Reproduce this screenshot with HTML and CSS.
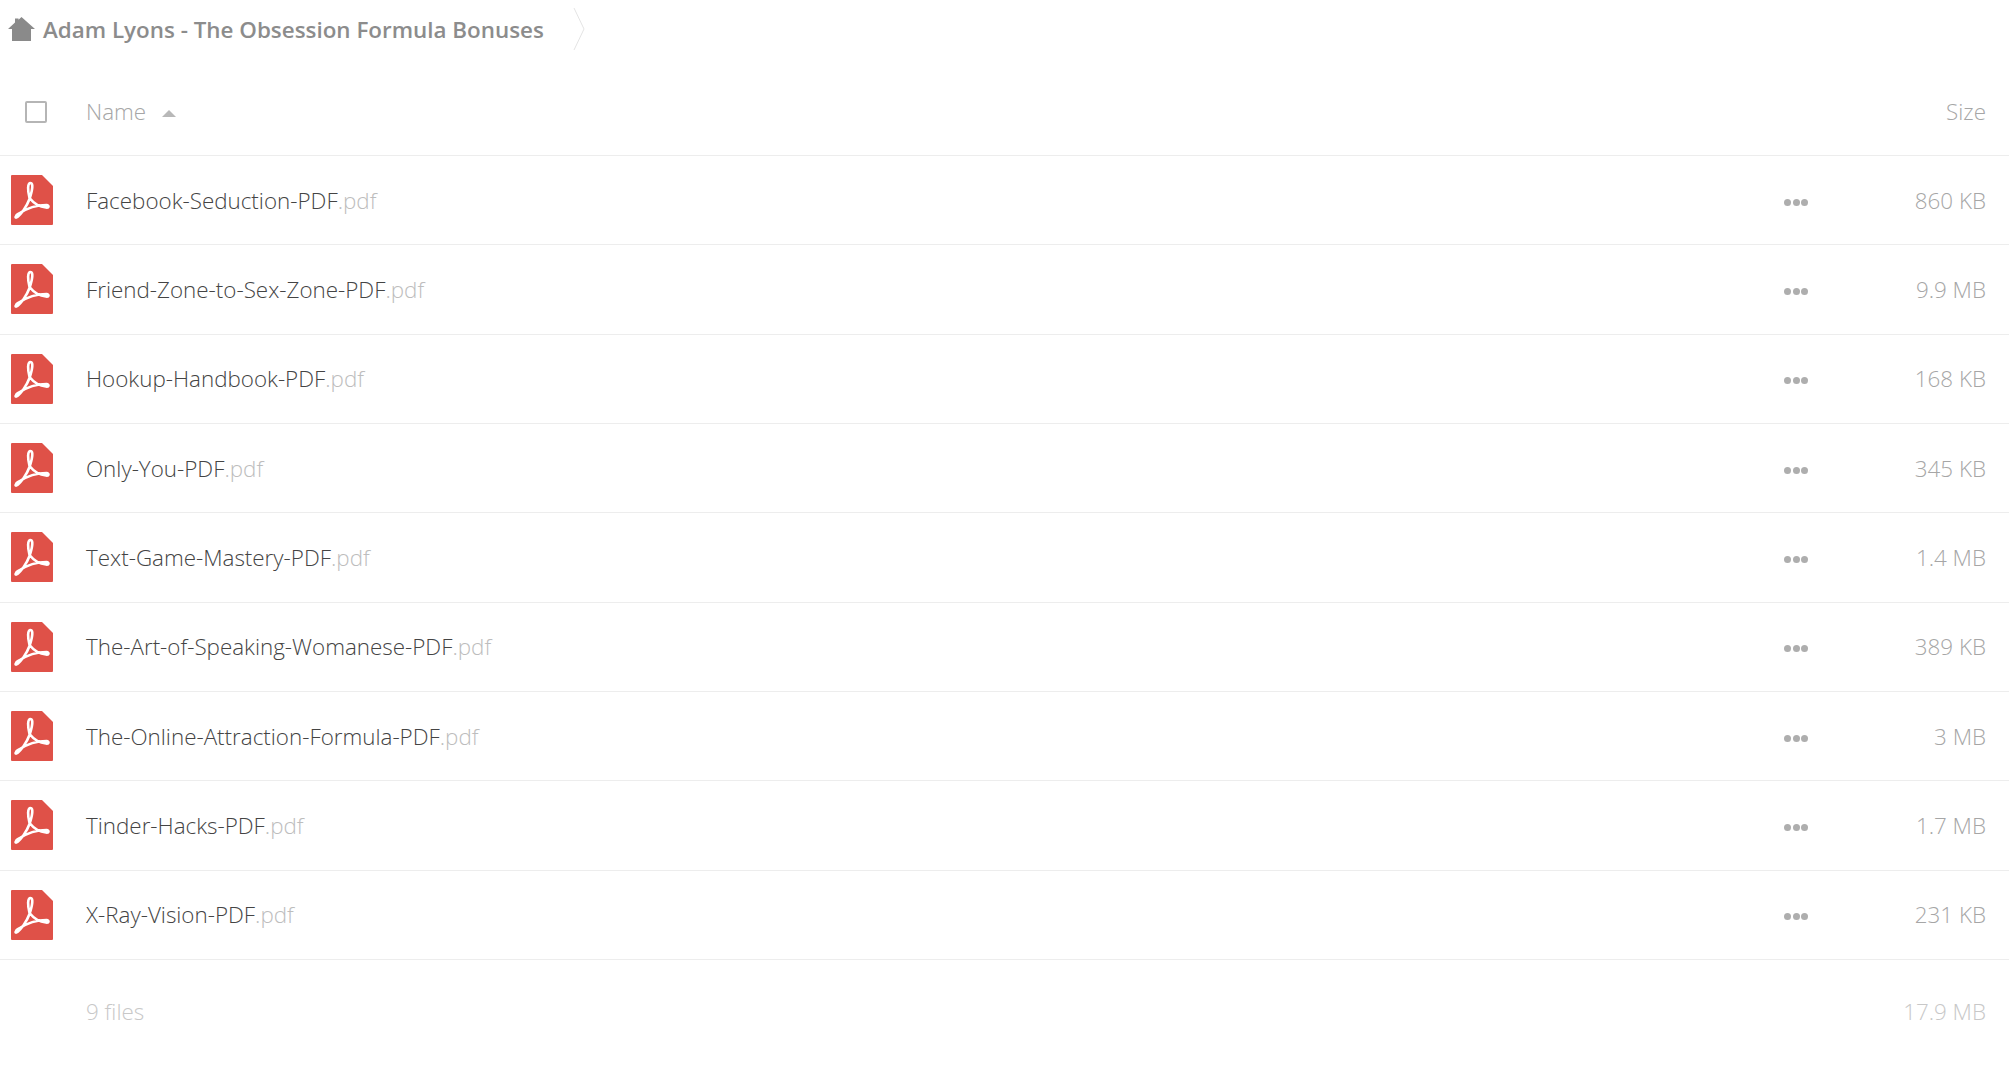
FILE: index.html
```html
<!DOCTYPE html>
<html lang="en">

<head>
  <meta charset="UTF-8">
  <title>Adam Lyons - The Obsession Formula Bonuses</title>
  <link rel="stylesheet" href="styles.css">
</head>

<body>
  <svg class="defs" width="0" height="0">
    <symbol id="pdf" viewBox="0 0 42 50">
      <path d="M1 0H31L42 11V49a1 1 0 0 1-1 1H1a1 1 0 0 1-1-1V1a1 1 0 0 1 1-1z" fill="#df5148" />
      <path d="M18.500 23C16.500 15 16.500 8 19.500 8C22.500 8 21.500 15 18.500 24C16 31 9.500 40 6.500 42C3.500 44 4 40.500 8 38.500C14 34.500 24 30 35.500 30C38.500 30.500 38 33 35 32.500C29 32 22.500 28 18.500 23z" fill="none" stroke="#fff" stroke-width="2.600" stroke-linejoin="round" />
    </symbol>
  </svg>

  <nav class="breadcrumb">
    <svg class="home" viewBox="0 0 27 24">
      <path d="M13.500 0L27 12H23V24H4V12H0L7 5.500V1.500H10.500V2.800z" fill="#8a8a8a" />
    </svg>
    <span class="crumb">Adam Lyons - The Obsession Formula Bonuses</span>
    <svg class="crumb-arrow" viewBox="0 0 12 42">
      <path d="M1 0L11 21L1 42" fill="none" stroke="#e4e4e4" stroke-width="1" />
    </svg>
  </nav>

  <div class="file-head">
    <div class="col-icon"><span class="checkbox"></span></div>
    <div class="col-name">Name <span class="sort-arrow"></span></div>
    <div class="col-size">Size</div>
  </div>

  <ul class="file-list">
    <li class="file-row">
      <div class="col-icon"><svg class="pdf-icon"><use href="#pdf" /></svg></div>
      <div class="col-name file-name">Facebook-Seduction-PDF<span class="ext">.pdf</span></div>
      <div class="col-more"><span></span><span></span><span></span></div>
      <div class="col-size">860 KB</div>
    </li>
    <li class="file-row">
      <div class="col-icon"><svg class="pdf-icon"><use href="#pdf" /></svg></div>
      <div class="col-name file-name">Friend-Zone-to-Sex-Zone-PDF<span class="ext">.pdf</span></div>
      <div class="col-more"><span></span><span></span><span></span></div>
      <div class="col-size">9.9 MB</div>
    </li>
    <li class="file-row">
      <div class="col-icon"><svg class="pdf-icon"><use href="#pdf" /></svg></div>
      <div class="col-name file-name">Hookup-Handbook-PDF<span class="ext">.pdf</span></div>
      <div class="col-more"><span></span><span></span><span></span></div>
      <div class="col-size">168 KB</div>
    </li>
    <li class="file-row">
      <div class="col-icon"><svg class="pdf-icon"><use href="#pdf" /></svg></div>
      <div class="col-name file-name">Only-You-PDF<span class="ext">.pdf</span></div>
      <div class="col-more"><span></span><span></span><span></span></div>
      <div class="col-size">345 KB</div>
    </li>
    <li class="file-row">
      <div class="col-icon"><svg class="pdf-icon"><use href="#pdf" /></svg></div>
      <div class="col-name file-name">Text-Game-Mastery-PDF<span class="ext">.pdf</span></div>
      <div class="col-more"><span></span><span></span><span></span></div>
      <div class="col-size">1.4 MB</div>
    </li>
    <li class="file-row">
      <div class="col-icon"><svg class="pdf-icon"><use href="#pdf" /></svg></div>
      <div class="col-name file-name">The-Art-of-Speaking-Womanese-PDF<span class="ext">.pdf</span></div>
      <div class="col-more"><span></span><span></span><span></span></div>
      <div class="col-size">389 KB</div>
    </li>
    <li class="file-row">
      <div class="col-icon"><svg class="pdf-icon"><use href="#pdf" /></svg></div>
      <div class="col-name file-name">The-Online-Attraction-Formula-PDF<span class="ext">.pdf</span></div>
      <div class="col-more"><span></span><span></span><span></span></div>
      <div class="col-size">3 MB</div>
    </li>
    <li class="file-row">
      <div class="col-icon"><svg class="pdf-icon"><use href="#pdf" /></svg></div>
      <div class="col-name file-name">Tinder-Hacks-PDF<span class="ext">.pdf</span></div>
      <div class="col-more"><span></span><span></span><span></span></div>
      <div class="col-size">1.7 MB</div>
    </li>
    <li class="file-row">
      <div class="col-icon"><svg class="pdf-icon"><use href="#pdf" /></svg></div>
      <div class="col-name file-name">X-Ray-Vision-PDF<span class="ext">.pdf</span></div>
      <div class="col-more"><span></span><span></span><span></span></div>
      <div class="col-size">231 KB</div>
    </li>
  </ul>

  <div class="file-summary">
    <div class="col-icon"></div>
    <div class="col-name">9 files</div>
    <div class="col-size">17.9 MB</div>
  </div>
</body>

</html>
```

FILE: styles.css
```css
:root {
  --line-color: #ededed;
  --muted-color: #a6a6a6;
  --faint-color: #c8c8c8;
}

html,
body {
  height: 100%;
}

body {
  font-family: 'Open Sans', sans-serif;
  font-weight: 300;
  font-size: 22.400px;
  color: #444;
  background: #fff;
  margin: 0;
  overflow: hidden;
}

.defs {
  display: block;
  height: 0;
}

.breadcrumb {
  display: flex;
  align-items: center;
  height: 58px;
  padding-left: 8px;
}

.home {
  width: 27px;
  height: 24px;
  margin-right: 8px;
}

.crumb {
  font-weight: 600;
  color: #8c8c8c;
}

.crumb-arrow {
  width: 12px;
  height: 42px;
  margin-left: 29px;
}

.file-head,
.file-row,
.file-summary {
  display: flex;
  align-items: center;
}

.file-head {
  height: 98px;
  padding-top: 9px;
  border-bottom: 1px solid var(--line-color);
  box-sizing: border-box;
  color: var(--muted-color);
}

.col-icon {
  width: 86px;
  flex-shrink: 0;
}

.col-name {
  flex: 1;
}

.col-size {
  width: 120px;
  padding-right: 23px;
  text-align: right;
  color: var(--muted-color);
}

.checkbox {
  display: block;
  width: 18px;
  height: 18px;
  margin-left: 25px;
  margin-top: 2px;
  border: 2px solid #b5b5b5;
  border-radius: 2px;
}

.sort-arrow {
  display: inline-block;
  width: 0;
  height: 0;
  margin-left: 10px;
  vertical-align: 3px;
  border-left: 7px solid transparent;
  border-right: 7px solid transparent;
  border-bottom: 7px solid #b8b8b8;
}

.file-list {
  list-style: none;
  margin: 0;
  padding: 0;
}

.file-row {
  height: 89.330px;
  box-sizing: border-box;
  border-bottom: 1px solid var(--line-color);
}

.pdf-icon {
  display: block;
  width: 42px;
  height: 50px;
  margin-left: 11px;
}

.ext {
  color: #bdbdbd;
}

.col-more {
  display: flex;
  gap: 1.500px;
  width: 82px;
  margin-top: 4px;
}

.col-more span {
  width: 7px;
  height: 7px;
  border-radius: 50%;
  background: #aeaeae;
}

.file-summary {
  height: 100px;
  padding-top: 3px;
  box-sizing: border-box;
  color: var(--faint-color);
}

.file-summary .col-size {
  color: var(--faint-color);
}
```
